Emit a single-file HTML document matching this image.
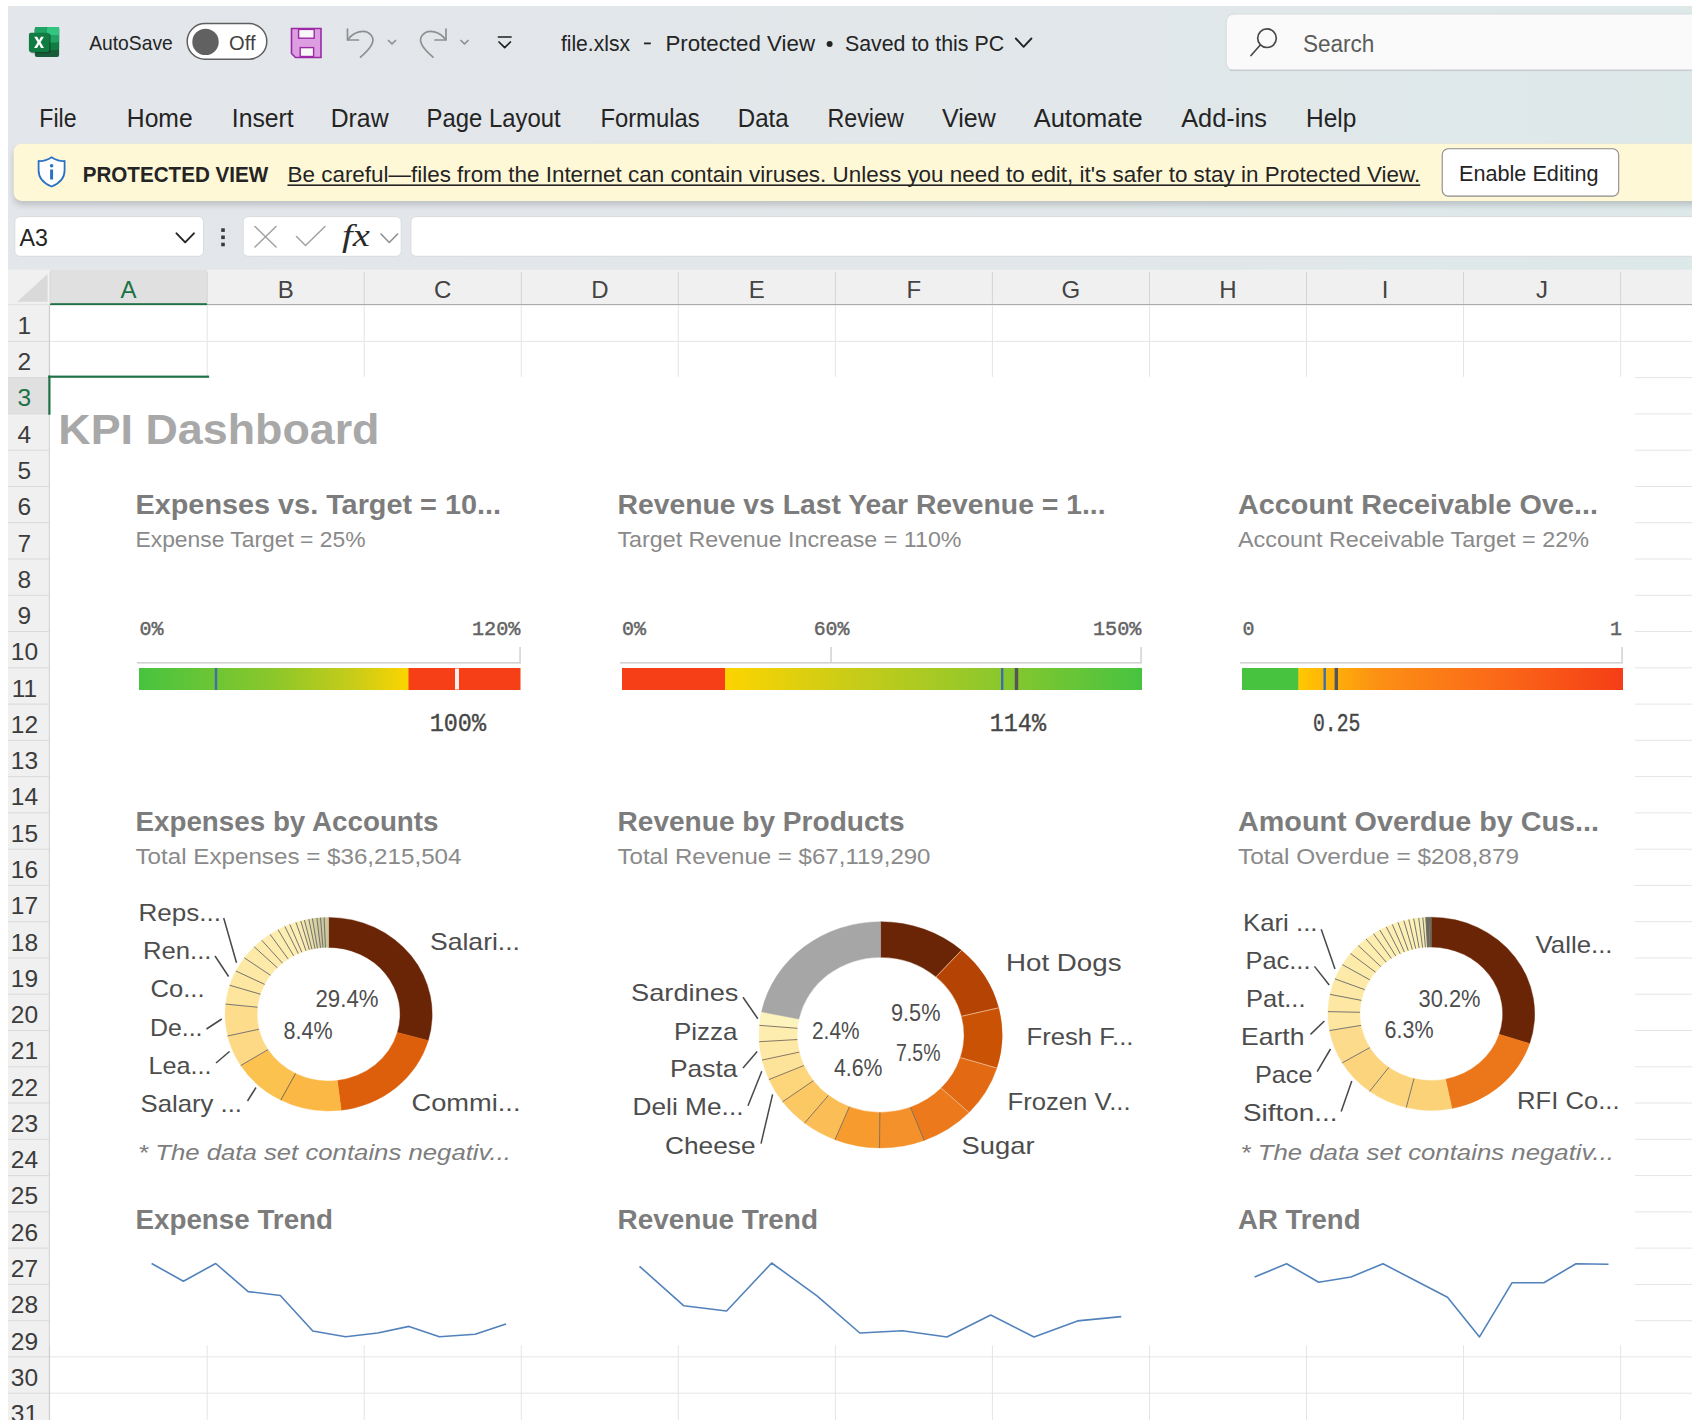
<!DOCTYPE html>
<html><head><meta charset="utf-8"><title>file.xlsx</title>
<style>
html,body{margin:0;padding:0;background:#fff;}
body{width:1703px;height:1427px;overflow:hidden;font-family:"Liberation Sans", sans-serif;}
svg{display:block;}

</style></head><body>
<svg width="1703" height="1427" viewBox="0 0 1703 1427" style="font-family:'Liberation Sans', sans-serif">
<defs>
<linearGradient id="appbg" x1="0" y1="0" x2="1" y2="0"><stop offset="0" stop-color="#e3e6ea"/><stop offset="0.55" stop-color="#e2e7ea"/><stop offset="1" stop-color="#dde8e9"/></linearGradient>
<linearGradient id="shadow" x1="0" y1="0" x2="0" y2="1"><stop offset="0" stop-color="#c9cfd2"/><stop offset="1" stop-color="#c9cfd2" stop-opacity="0"/></linearGradient>
<linearGradient id="g1" x1="0" x2="1"><stop offset="0" stop-color="#47c340"/><stop offset="0.5" stop-color="#8cc72a"/><stop offset="0.8" stop-color="#c9cc18"/><stop offset="1" stop-color="#fdd400"/></linearGradient>
<linearGradient id="g2" x1="0" x2="1"><stop offset="0" stop-color="#fdd400"/><stop offset="0.3" stop-color="#c9cc18"/><stop offset="0.6" stop-color="#95c82a"/><stop offset="1" stop-color="#47c340"/></linearGradient>
<linearGradient id="g3" x1="0" x2="1"><stop offset="0" stop-color="#ffc800"/><stop offset="0.25" stop-color="#fc8f14"/><stop offset="0.6" stop-color="#fb6a18"/><stop offset="1" stop-color="#f53d16"/></linearGradient>
<filter id="blur3" x="-5%" y="-50%" width="110%" height="200%"><feGaussianBlur stdDeviation="3"/></filter>
</defs>
<rect x="0" y="0" width="1703" height="1427" fill="#ffffff"/>
<rect x="8" y="6" width="1684" height="1414" fill="url(#appbg)"/>
<g>
<rect x="34.8" y="27" width="24.3" height="30.1" rx="2" fill="#185c37"/>
<rect x="34.8" y="27" width="24.3" height="23" rx="2" fill="#107c41"/>
<rect x="34.8" y="27" width="24.3" height="15.5" rx="2" fill="#21a366"/>
<rect x="47" y="27" width="12.1" height="8" rx="1.5" fill="#33c481"/>
<rect x="47" y="33" width="12.1" height="2" fill="#33c481"/>
<rect x="30.2" y="33.5" width="20.5" height="19.8" rx="2" fill="#0b3d20" opacity="0.55"/>
<rect x="28.9" y="32.7" width="20.1" height="19.2" rx="2" fill="#107c41"/>
<path d="M34.2 36.8 L37.2 36.8 L39.1 40.3 L41.0 36.8 L43.9 36.8 L40.6 42.3 L44.0 48.0 L41.0 48.0 L39.1 44.3 L37.1 48.0 L34.1 48.0 L37.6 42.3 Z" fill="#ffffff"/>
</g>
<text x="89.2" y="50.0" font-size="21" fill="#242424" textLength="83.6" lengthAdjust="spacingAndGlyphs">AutoSave</text>
<rect x="187.2" y="23.6" width="79.6" height="35.6" rx="17.8" fill="#ffffff" stroke="#5f5f5f" stroke-width="1.5"/>
<circle cx="205.5" cy="41.9" r="13.2" fill="#616161"/>
<text x="229.1" y="50.0" font-size="21" fill="#424242" textLength="26.5" lengthAdjust="spacingAndGlyphs">Off</text>
<path d="M291.5 28.5 H321 V57.5 H295.5 L291.5 53.5 Z" fill="#dc9ee0" stroke="#9c2aa6" stroke-width="1.6"/>
<rect x="298.6" y="29.4" width="15.6" height="8.8" fill="#f8f8f8" stroke="#9c2aa6" stroke-width="1.4"/>
<rect x="300.2" y="47.6" width="13.4" height="8.9" fill="#f8f8f8" stroke="#9c2aa6" stroke-width="1.4"/>
<g fill="none" stroke="#8f8f8f" stroke-width="1.7" stroke-linecap="round" stroke-linejoin="round">
<path d="M347.5 29 V40 H358.5"/>
<path d="M348 39.5 C353 32 365 28 371 35 C376 41 371 48 360.5 57.2"/>
<path d="M388.5 40.5 L392 44 L395.5 40.5"/>
<path d="M446 29 V40 H435"/>
<path d="M445.5 39.5 C440.5 32 428.5 28 422.5 35 C417.5 41 422.5 48 433 57.2"/>
<path d="M461 40.5 L464.5 44 L468 40.5"/>
</g>
<g fill="none" stroke="#1f1f1f" stroke-width="1.7" stroke-linecap="round" stroke-linejoin="round">
<path d="M498.5 37 H511"/><path d="M499 42 L504.7 47.7 L510.4 42"/>
</g>
<text x="560.9" y="51.0" font-size="22.5" fill="#242424" textLength="69.1" lengthAdjust="spacingAndGlyphs">file.xlsx</text>
<rect x="644" y="42.5" width="6.8" height="1.8" fill="#242424"/>
<text x="665.4" y="51.0" font-size="22.5" fill="#242424" textLength="149.6" lengthAdjust="spacingAndGlyphs">Protected View</text>
<circle cx="829.6" cy="44" r="3" fill="#242424"/>
<text x="844.9" y="51.0" font-size="22.5" fill="#242424" textLength="159.2" lengthAdjust="spacingAndGlyphs">Saved to this PC</text>
<path d="M1015.8 38.5 L1023.6 46.8 L1031.4 38.5" fill="none" stroke="#242424" stroke-width="1.9" stroke-linecap="round" stroke-linejoin="round"/>
<rect x="1226.2" y="14" width="480" height="56.5" rx="8" fill="#fafafa" stroke="#d6dadd" stroke-width="1"/>
<rect x="1230" y="69.5" width="470" height="1.5" fill="#c8cccf"/>
<g fill="none" stroke="#4a4a4a" stroke-width="1.7" stroke-linecap="round"><circle cx="1267" cy="38.2" r="9.3"/><path d="M1260.3 45 L1251 55.5"/></g>
<text x="1302.9" y="52.0" font-size="23" fill="#5c5c5c" textLength="71.5" lengthAdjust="spacingAndGlyphs">Search</text>
<text x="39.3" y="126.8" font-size="25.5" fill="#242424" textLength="37.2" lengthAdjust="spacingAndGlyphs">File</text>
<text x="126.8" y="126.8" font-size="25.5" fill="#242424" textLength="65.9" lengthAdjust="spacingAndGlyphs">Home</text>
<text x="231.8" y="126.8" font-size="25.5" fill="#242424" textLength="61.9" lengthAdjust="spacingAndGlyphs">Insert</text>
<text x="330.7" y="126.8" font-size="25.5" fill="#242424" textLength="57.9" lengthAdjust="spacingAndGlyphs">Draw</text>
<text x="426.6" y="126.8" font-size="25.5" fill="#242424" textLength="134.0" lengthAdjust="spacingAndGlyphs">Page Layout</text>
<text x="600.4" y="126.8" font-size="25.5" fill="#242424" textLength="99.2" lengthAdjust="spacingAndGlyphs">Formulas</text>
<text x="737.8" y="126.8" font-size="25.5" fill="#242424" textLength="50.8" lengthAdjust="spacingAndGlyphs">Data</text>
<text x="827.5" y="126.8" font-size="25.5" fill="#242424" textLength="76.2" lengthAdjust="spacingAndGlyphs">Review</text>
<text x="942.1" y="126.8" font-size="25.5" fill="#242424" textLength="53.7" lengthAdjust="spacingAndGlyphs">View</text>
<text x="1033.7" y="126.8" font-size="25.5" fill="#242424" textLength="109.0" lengthAdjust="spacingAndGlyphs">Automate</text>
<text x="1181.2" y="126.8" font-size="25.5" fill="#242424" textLength="85.8" lengthAdjust="spacingAndGlyphs">Add-ins</text>
<text x="1306.1" y="126.8" font-size="25.5" fill="#242424" textLength="50.3" lengthAdjust="spacingAndGlyphs">Help</text>
<rect x="13.7" y="148" width="1700" height="57" rx="8" fill="#000000" opacity="0.16" filter="url(#blur3)"/>
<rect x="13.7" y="143.7" width="1700" height="57.2" rx="8" fill="#fff8d7"/>
<rect x="1692" y="140" width="20" height="80" fill="#ffffff"/>
<path d="M51.6 157.2 C46.5 160.5 42 161.3 38.6 161 V170.5 C38.6 178.5 44 183.5 51.6 186.5 C59.2 183.5 64.6 178.5 64.6 170.5 V161 C61.2 161.3 56.7 160.5 51.6 157.2 Z" fill="#ffffff" stroke="#2b72c4" stroke-width="1.8" stroke-linejoin="round"/>
<circle cx="51.6" cy="165.8" r="1.8" fill="#2b72c4"/>
<rect x="50.1" y="169.5" width="3" height="10" fill="#2b72c4"/>
<text x="82.7" y="182.0" font-size="22.5" fill="#242424" font-weight="bold" textLength="185.5" lengthAdjust="spacingAndGlyphs">PROTECTED VIEW</text>
<text x="287.5" y="182.0" font-size="22.5" fill="#242424" textLength="1132.7" lengthAdjust="spacingAndGlyphs">Be careful—files from the Internet can contain viruses. Unless you need to edit, it's safer to stay in Protected View.</text>
<rect x="287.5" y="184.4" width="1132.7" height="1.6" fill="#242424"/>
<rect x="1442.2" y="148.8" width="176.5" height="47.3" rx="6" fill="#ffffff" stroke="#8a8a8a" stroke-width="1.1"/>
<text x="1459.0" y="181.3" font-size="22.5" fill="#242424" textLength="139.6" lengthAdjust="spacingAndGlyphs">Enable Editing</text>
<rect x="14.8" y="216.6" width="188.7" height="39.7" rx="5" fill="#ffffff" stroke="#d9dbdd" stroke-width="1"/>
<text x="19.6" y="245.6" font-size="24" fill="#242424" textLength="28.4" lengthAdjust="spacingAndGlyphs">A3</text>
<path d="M176.5 233.3 L185.2 242.3 L193.9 233.3" fill="none" stroke="#242424" stroke-width="1.9" stroke-linecap="round" stroke-linejoin="round"/>
<rect x="221.2" y="228.3" width="3.6" height="3.6" fill="#3a3a3a"/>
<rect x="221.2" y="235.5" width="3.6" height="3.6" fill="#3a3a3a"/>
<rect x="221.2" y="242.7" width="3.6" height="3.6" fill="#3a3a3a"/>
<rect x="243.2" y="216.6" width="158" height="39.7" rx="5" fill="#ffffff" stroke="#d9dbdd" stroke-width="1"/>
<g fill="none" stroke="#a3a3a3" stroke-width="1.6" stroke-linecap="round"><path d="M255 226.5 L276 247"/><path d="M276 226.5 L255 247"/><path d="M296.5 236.5 L305.5 245.5 L325 226.5"/></g>
<text x="342.0" y="246.0" font-size="32" fill="#2a2a2a" font-style="italic" font-family="'Liberation Serif', serif" textLength="27.7" lengthAdjust="spacingAndGlyphs">fx</text>
<path d="M381 234 L389.3 242.5 L397.6 234" fill="none" stroke="#8f8f8f" stroke-width="1.6" stroke-linecap="round" stroke-linejoin="round"/>
<rect x="410.9" y="216.6" width="1300" height="39.7" rx="5" fill="#ffffff" stroke="#d9dbdd" stroke-width="1"/>
<rect x="1692" y="210" width="20" height="60" fill="#ffffff"/>
<rect x="8" y="269.6" width="1684" height="35.4" fill="#f0f0f0"/>
<path d="M17.2 301.8 L47.6 274 L47.6 301.8 Z" fill="#d9d9d9"/>
<rect x="50.1" y="269.6" width="157.05" height="35.4" fill="#e0e0e0"/>
<rect x="49.6" y="304" width="1642.4" height="1.6" fill="#ababab"/><rect x="8" y="304.4" width="41.6" height="1" fill="#dadada"/>
<rect x="50.1" y="303.2" width="157.05" height="2.5" fill="#1e7145"/>
<rect x="49.6" y="272" width="1" height="31.6" fill="#d4d4d4"/>
<rect x="206.7" y="272" width="1" height="31.6" fill="#d4d4d4"/>
<rect x="363.7" y="272" width="1" height="31.6" fill="#d4d4d4"/>
<rect x="520.8" y="272" width="1" height="31.6" fill="#d4d4d4"/>
<rect x="677.8" y="272" width="1" height="31.6" fill="#d4d4d4"/>
<rect x="834.9" y="272" width="1" height="31.6" fill="#d4d4d4"/>
<rect x="991.9" y="272" width="1" height="31.6" fill="#d4d4d4"/>
<rect x="1149.0" y="272" width="1" height="31.6" fill="#d4d4d4"/>
<rect x="1306.0" y="272" width="1" height="31.6" fill="#d4d4d4"/>
<rect x="1463.0" y="272" width="1" height="31.6" fill="#d4d4d4"/>
<rect x="1620.1" y="272" width="1" height="31.6" fill="#d4d4d4"/>
<text x="128.6" y="297.7" font-size="24" fill="#1e7145" text-anchor="middle">A</text>
<text x="285.7" y="297.7" font-size="24" fill="#444444" text-anchor="middle">B</text>
<text x="442.7" y="297.7" font-size="24" fill="#444444" text-anchor="middle">C</text>
<text x="599.8" y="297.7" font-size="24" fill="#444444" text-anchor="middle">D</text>
<text x="756.8" y="297.7" font-size="24" fill="#444444" text-anchor="middle">E</text>
<text x="913.9" y="297.7" font-size="24" fill="#444444" text-anchor="middle">F</text>
<text x="1070.9" y="297.7" font-size="24" fill="#444444" text-anchor="middle">G</text>
<text x="1228.0" y="297.7" font-size="24" fill="#444444" text-anchor="middle">H</text>
<text x="1385.0" y="297.7" font-size="24" fill="#444444" text-anchor="middle">I</text>
<text x="1542.1" y="297.7" font-size="24" fill="#444444" text-anchor="middle">J</text>
<rect x="49.6" y="305.2" width="1642.4" height="1114.8" fill="#ffffff"/>
<rect x="49.6" y="340.9" width="1642.4" height="1" fill="#e5e5e5"/><rect x="49.6" y="377.1" width="1642.4" height="1" fill="#e5e5e5"/><rect x="49.6" y="413.4" width="1642.4" height="1" fill="#e5e5e5"/><rect x="49.6" y="449.7" width="1642.4" height="1" fill="#e5e5e5"/><rect x="49.6" y="486.0" width="1642.4" height="1" fill="#e5e5e5"/><rect x="49.6" y="522.2" width="1642.4" height="1" fill="#e5e5e5"/><rect x="49.6" y="558.5" width="1642.4" height="1" fill="#e5e5e5"/><rect x="49.6" y="594.8" width="1642.4" height="1" fill="#e5e5e5"/><rect x="49.6" y="631.0" width="1642.4" height="1" fill="#e5e5e5"/><rect x="49.6" y="667.3" width="1642.4" height="1" fill="#e5e5e5"/><rect x="49.6" y="703.6" width="1642.4" height="1" fill="#e5e5e5"/><rect x="49.6" y="739.8" width="1642.4" height="1" fill="#e5e5e5"/><rect x="49.6" y="776.1" width="1642.4" height="1" fill="#e5e5e5"/><rect x="49.6" y="812.4" width="1642.4" height="1" fill="#e5e5e5"/><rect x="49.6" y="848.7" width="1642.4" height="1" fill="#e5e5e5"/><rect x="49.6" y="884.9" width="1642.4" height="1" fill="#e5e5e5"/><rect x="49.6" y="921.2" width="1642.4" height="1" fill="#e5e5e5"/><rect x="49.6" y="957.5" width="1642.4" height="1" fill="#e5e5e5"/><rect x="49.6" y="993.7" width="1642.4" height="1" fill="#e5e5e5"/><rect x="49.6" y="1030.0" width="1642.4" height="1" fill="#e5e5e5"/><rect x="49.6" y="1066.3" width="1642.4" height="1" fill="#e5e5e5"/><rect x="49.6" y="1102.5" width="1642.4" height="1" fill="#e5e5e5"/><rect x="49.6" y="1138.8" width="1642.4" height="1" fill="#e5e5e5"/><rect x="49.6" y="1175.1" width="1642.4" height="1" fill="#e5e5e5"/><rect x="49.6" y="1211.4" width="1642.4" height="1" fill="#e5e5e5"/><rect x="49.6" y="1247.6" width="1642.4" height="1" fill="#e5e5e5"/><rect x="49.6" y="1283.9" width="1642.4" height="1" fill="#e5e5e5"/><rect x="49.6" y="1320.2" width="1642.4" height="1" fill="#e5e5e5"/><rect x="49.6" y="1356.4" width="1642.4" height="1" fill="#e5e5e5"/><rect x="49.6" y="1392.7" width="1642.4" height="1" fill="#e5e5e5"/><rect x="206.7" y="305.2" width="1" height="1114.8" fill="#e5e5e5"/><rect x="363.7" y="305.2" width="1" height="1114.8" fill="#e5e5e5"/><rect x="520.8" y="305.2" width="1" height="1114.8" fill="#e5e5e5"/><rect x="677.8" y="305.2" width="1" height="1114.8" fill="#e5e5e5"/><rect x="834.9" y="305.2" width="1" height="1114.8" fill="#e5e5e5"/><rect x="991.9" y="305.2" width="1" height="1114.8" fill="#e5e5e5"/><rect x="1149.0" y="305.2" width="1" height="1114.8" fill="#e5e5e5"/><rect x="1306.0" y="305.2" width="1" height="1114.8" fill="#e5e5e5"/><rect x="1463.0" y="305.2" width="1" height="1114.8" fill="#e5e5e5"/><rect x="1620.1" y="305.2" width="1" height="1114.8" fill="#e5e5e5"/>
<rect x="8" y="305.2" width="41.6" height="1114.8" fill="#f0f0f0"/>
<rect x="8" y="377.6" width="41.6" height="36.3" fill="#e0e0e0"/>
<rect x="48.8" y="305.2" width="1.3" height="1114.8" fill="#cfcfcf"/>
<rect x="8" y="340.9" width="41" height="1" fill="#dadada"/>
<rect x="8" y="377.1" width="41" height="1" fill="#dadada"/>
<rect x="8" y="413.4" width="41" height="1" fill="#dadada"/>
<rect x="8" y="449.7" width="41" height="1" fill="#dadada"/>
<rect x="8" y="486.0" width="41" height="1" fill="#dadada"/>
<rect x="8" y="522.2" width="41" height="1" fill="#dadada"/>
<rect x="8" y="558.5" width="41" height="1" fill="#dadada"/>
<rect x="8" y="594.8" width="41" height="1" fill="#dadada"/>
<rect x="8" y="631.0" width="41" height="1" fill="#dadada"/>
<rect x="8" y="667.3" width="41" height="1" fill="#dadada"/>
<rect x="8" y="703.6" width="41" height="1" fill="#dadada"/>
<rect x="8" y="739.8" width="41" height="1" fill="#dadada"/>
<rect x="8" y="776.1" width="41" height="1" fill="#dadada"/>
<rect x="8" y="812.4" width="41" height="1" fill="#dadada"/>
<rect x="8" y="848.7" width="41" height="1" fill="#dadada"/>
<rect x="8" y="884.9" width="41" height="1" fill="#dadada"/>
<rect x="8" y="921.2" width="41" height="1" fill="#dadada"/>
<rect x="8" y="957.5" width="41" height="1" fill="#dadada"/>
<rect x="8" y="993.7" width="41" height="1" fill="#dadada"/>
<rect x="8" y="1030.0" width="41" height="1" fill="#dadada"/>
<rect x="8" y="1066.3" width="41" height="1" fill="#dadada"/>
<rect x="8" y="1102.5" width="41" height="1" fill="#dadada"/>
<rect x="8" y="1138.8" width="41" height="1" fill="#dadada"/>
<rect x="8" y="1175.1" width="41" height="1" fill="#dadada"/>
<rect x="8" y="1211.4" width="41" height="1" fill="#dadada"/>
<rect x="8" y="1247.6" width="41" height="1" fill="#dadada"/>
<rect x="8" y="1283.9" width="41" height="1" fill="#dadada"/>
<rect x="8" y="1320.2" width="41" height="1" fill="#dadada"/>
<rect x="8" y="1356.4" width="41" height="1" fill="#dadada"/>
<rect x="8" y="1392.7" width="41" height="1" fill="#dadada"/>
<text x="24.4" y="333.9" font-size="24.5" fill="#3c3c3c" text-anchor="middle">1</text>
<text x="24.4" y="370.2" font-size="24.5" fill="#3c3c3c" text-anchor="middle">2</text>
<text x="24.4" y="406.4" font-size="24.5" fill="#1e7145" text-anchor="middle">3</text>
<text x="24.4" y="442.7" font-size="24.5" fill="#3c3c3c" text-anchor="middle">4</text>
<text x="24.4" y="479.0" font-size="24.5" fill="#3c3c3c" text-anchor="middle">5</text>
<text x="24.4" y="515.2" font-size="24.5" fill="#3c3c3c" text-anchor="middle">6</text>
<text x="24.4" y="551.5" font-size="24.5" fill="#3c3c3c" text-anchor="middle">7</text>
<text x="24.4" y="587.8" font-size="24.5" fill="#3c3c3c" text-anchor="middle">8</text>
<text x="24.4" y="624.1" font-size="24.5" fill="#3c3c3c" text-anchor="middle">9</text>
<text x="24.4" y="660.3" font-size="24.5" fill="#3c3c3c" text-anchor="middle">10</text>
<text x="24.4" y="696.6" font-size="24.5" fill="#3c3c3c" text-anchor="middle">11</text>
<text x="24.4" y="732.9" font-size="24.5" fill="#3c3c3c" text-anchor="middle">12</text>
<text x="24.4" y="769.1" font-size="24.5" fill="#3c3c3c" text-anchor="middle">13</text>
<text x="24.4" y="805.4" font-size="24.5" fill="#3c3c3c" text-anchor="middle">14</text>
<text x="24.4" y="841.7" font-size="24.5" fill="#3c3c3c" text-anchor="middle">15</text>
<text x="24.4" y="878.0" font-size="24.5" fill="#3c3c3c" text-anchor="middle">16</text>
<text x="24.4" y="914.2" font-size="24.5" fill="#3c3c3c" text-anchor="middle">17</text>
<text x="24.4" y="950.5" font-size="24.5" fill="#3c3c3c" text-anchor="middle">18</text>
<text x="24.4" y="986.8" font-size="24.5" fill="#3c3c3c" text-anchor="middle">19</text>
<text x="24.4" y="1023.0" font-size="24.5" fill="#3c3c3c" text-anchor="middle">20</text>
<text x="24.4" y="1059.3" font-size="24.5" fill="#3c3c3c" text-anchor="middle">21</text>
<text x="24.4" y="1095.6" font-size="24.5" fill="#3c3c3c" text-anchor="middle">22</text>
<text x="24.4" y="1131.8" font-size="24.5" fill="#3c3c3c" text-anchor="middle">23</text>
<text x="24.4" y="1168.1" font-size="24.5" fill="#3c3c3c" text-anchor="middle">24</text>
<text x="24.4" y="1204.4" font-size="24.5" fill="#3c3c3c" text-anchor="middle">25</text>
<text x="24.4" y="1240.7" font-size="24.5" fill="#3c3c3c" text-anchor="middle">26</text>
<text x="24.4" y="1276.9" font-size="24.5" fill="#3c3c3c" text-anchor="middle">27</text>
<text x="24.4" y="1313.2" font-size="24.5" fill="#3c3c3c" text-anchor="middle">28</text>
<text x="24.4" y="1349.5" font-size="24.5" fill="#3c3c3c" text-anchor="middle">29</text>
<text x="24.4" y="1385.7" font-size="24.5" fill="#3c3c3c" text-anchor="middle">30</text>
<text x="24.4" y="1422.0" font-size="24.5" fill="#3c3c3c" text-anchor="middle">31</text>
<rect x="49.8" y="376.8" width="1585.2" height="968.6" fill="#ffffff"/>
<rect x="48.3" y="375.6" width="160.8" height="2.2" fill="#1e7145"/>
<rect x="48.3" y="375.6" width="2.2" height="39.1" fill="#1e7145"/>
<text x="58.3" y="443.8" font-size="43" fill="#a8a8a8" font-weight="bold" textLength="321.2" lengthAdjust="spacingAndGlyphs">KPI Dashboard</text>
<text x="135.5" y="514.0" font-size="27.5" fill="#7c7c7c" font-weight="bold" textLength="365.5" lengthAdjust="spacingAndGlyphs">Expenses vs. Target = 10...</text>
<text x="135.5" y="547.0" font-size="22" fill="#8a8a8a" textLength="230.0" lengthAdjust="spacingAndGlyphs">Expense Target = 25%</text>
<text x="617.5" y="514.0" font-size="27.5" fill="#7c7c7c" font-weight="bold" textLength="488.0" lengthAdjust="spacingAndGlyphs">Revenue vs Last Year Revenue = 1...</text>
<text x="617.5" y="547.0" font-size="22" fill="#8a8a8a" textLength="344.0" lengthAdjust="spacingAndGlyphs">Target Revenue Increase = 110%</text>
<text x="1238.0" y="514.0" font-size="27.5" fill="#7c7c7c" font-weight="bold" textLength="360.0" lengthAdjust="spacingAndGlyphs">Account Receivable Ove...</text>
<text x="1238.0" y="547.0" font-size="22" fill="#8a8a8a" textLength="351.0" lengthAdjust="spacingAndGlyphs">Account Receivable Target = 22%</text>
<rect x="137" y="662" width="384" height="1.6" fill="#d2d2d2"/>
<rect x="519.3" y="647" width="1.5" height="16" fill="#d2d2d2"/>
<text x="139.5" y="634.6" font-size="21" fill="#636363" stroke="#636363" stroke-width="0.45" font-family="'Liberation Mono', monospace" textLength="24.0" lengthAdjust="spacingAndGlyphs">0%</text>
<text x="472.0" y="634.6" font-size="21" fill="#636363" stroke="#636363" stroke-width="0.45" font-family="'Liberation Mono', monospace" textLength="48.5" lengthAdjust="spacingAndGlyphs">120%</text>
<rect x="139" y="668" width="270" height="22" fill="url(#g1)"/>
<rect x="408.5" y="668" width="112" height="22" fill="#f63f17"/>
<rect x="214.8" y="668" width="2.4" height="22" fill="#3f6ea8"/>
<rect x="455" y="668.5" width="4" height="21" fill="#f0f0f0"/>
<text x="429.7" y="730.6" font-size="25" fill="#464646" stroke="#464646" stroke-width="0.35" font-family="'Liberation Mono', monospace" textLength="56.3" lengthAdjust="spacingAndGlyphs">100%</text>
<rect x="620" y="662" width="522" height="1.6" fill="#d2d2d2"/>
<rect x="830.3" y="647" width="1.5" height="16" fill="#d2d2d2"/>
<rect x="1140.3" y="647" width="1.5" height="16" fill="#d2d2d2"/>
<text x="622.0" y="634.6" font-size="21" fill="#636363" stroke="#636363" stroke-width="0.45" font-family="'Liberation Mono', monospace" textLength="24.0" lengthAdjust="spacingAndGlyphs">0%</text>
<text x="813.7" y="634.6" font-size="21" fill="#636363" stroke="#636363" stroke-width="0.45" font-family="'Liberation Mono', monospace" textLength="35.8" lengthAdjust="spacingAndGlyphs">60%</text>
<text x="1093.0" y="634.6" font-size="21" fill="#636363" stroke="#636363" stroke-width="0.45" font-family="'Liberation Mono', monospace" textLength="48.5" lengthAdjust="spacingAndGlyphs">150%</text>
<rect x="622" y="668" width="103.5" height="22" fill="#f63f17"/>
<rect x="725" y="668" width="417" height="22" fill="url(#g2)"/>
<rect x="1001" y="668" width="2.4" height="22" fill="#3f6ea8"/>
<rect x="1014.8" y="668" width="3.4" height="22" fill="#555555"/>
<text x="989.7" y="730.6" font-size="25" fill="#464646" stroke="#464646" stroke-width="0.35" font-family="'Liberation Mono', monospace" textLength="56.3" lengthAdjust="spacingAndGlyphs">114%</text>
<rect x="1240" y="662" width="383" height="1.6" fill="#d2d2d2"/>
<rect x="1621.3" y="647" width="1.5" height="16" fill="#d2d2d2"/>
<text x="1242.5" y="634.6" font-size="21" fill="#636363" stroke="#636363" stroke-width="0.45" font-family="'Liberation Mono', monospace" textLength="12.0" lengthAdjust="spacingAndGlyphs">0</text>
<text x="1610.0" y="634.6" font-size="21" fill="#636363" stroke="#636363" stroke-width="0.45" font-family="'Liberation Mono', monospace" textLength="12.0" lengthAdjust="spacingAndGlyphs">1</text>
<rect x="1242" y="668" width="56.8" height="22" fill="#47c340"/>
<rect x="1298.4" y="668" width="324.6" height="22" fill="url(#g3)"/>
<rect x="1323.5" y="668" width="2.4" height="22" fill="#3f6ea8"/>
<rect x="1334.6" y="668" width="3.4" height="22" fill="#555555"/>
<text x="1313.0" y="730.6" font-size="25" fill="#464646" stroke="#464646" stroke-width="0.35" font-family="'Liberation Mono', monospace" textLength="47.5" lengthAdjust="spacingAndGlyphs">0.25</text>
<text x="135.5" y="831.4" font-size="27.5" fill="#7c7c7c" font-weight="bold" textLength="303.0" lengthAdjust="spacingAndGlyphs">Expenses by Accounts</text>
<text x="135.5" y="864.0" font-size="22" fill="#8a8a8a" textLength="326.0" lengthAdjust="spacingAndGlyphs">Total Expenses = $36,215,504</text>
<text x="617.5" y="831.4" font-size="27.5" fill="#7c7c7c" font-weight="bold" textLength="287.0" lengthAdjust="spacingAndGlyphs">Revenue by Products</text>
<text x="617.5" y="864.0" font-size="22" fill="#8a8a8a" textLength="313.0" lengthAdjust="spacingAndGlyphs">Total Revenue = $67,119,290</text>
<text x="1238.0" y="831.4" font-size="27.5" fill="#7c7c7c" font-weight="bold" textLength="361.0" lengthAdjust="spacingAndGlyphs">Amount Overdue by Cus...</text>
<text x="1238.0" y="864.0" font-size="22" fill="#8a8a8a" textLength="281.0" lengthAdjust="spacingAndGlyphs">Total Overdue = $208,879</text>
<path d="M328.60 917.40 A103.58 96.80 0 0 1 428.26 1040.56 L397.38 1032.39 A71.48 66.80 0 0 0 328.60 947.40 Z" fill="#6a2506" stroke="#6a2506" stroke-width="0.4"/><path d="M428.26 1040.56 A103.58 96.80 0 0 1 341.22 1110.28 L337.31 1080.50 A71.48 66.80 0 0 0 397.38 1032.39 Z" fill="#dd5f0c" stroke="#dd5f0c" stroke-width="0.4"/><path d="M341.22 1110.28 A103.58 96.80 0 0 1 280.77 1100.06 L295.60 1073.45 A71.48 66.80 0 0 0 337.31 1080.50 Z" fill="#fbb845" stroke="#fbb845" stroke-width="0.4"/><path d="M280.77 1100.06 A103.58 96.80 0 0 1 240.76 1065.50 L267.98 1049.60 A71.48 66.80 0 0 0 295.60 1073.45 Z" fill="#fbc24f" stroke="#fbc24f" stroke-width="0.4"/><path d="M240.76 1065.50 A103.58 96.80 0 0 1 227.68 1035.98 L258.96 1029.23 A71.48 66.80 0 0 0 267.98 1049.60 Z" fill="#fdd985" stroke="#fdd985" stroke-width="0.4"/><path d="M227.68 1035.98 A103.58 96.80 0 0 1 225.59 1004.08 L257.52 1007.22 A71.48 66.80 0 0 0 258.96 1029.23 Z" fill="#fddc8b" stroke="#fddc8b" stroke-width="0.4"/><path d="M225.59 1004.08 A103.58 96.80 0 0 1 229.76 985.25 L260.39 994.22 A71.48 66.80 0 0 0 257.52 1007.22 Z" fill="#fde59d" stroke="#fde59d" stroke-width="0.4"/><path d="M229.76 985.25 A103.58 96.80 0 0 1 235.91 971.01 L264.63 984.39 A71.48 66.80 0 0 0 260.39 994.22 Z" fill="#fde7a1" stroke="#fde7a1" stroke-width="0.4"/><path d="M235.91 971.01 A103.58 96.80 0 0 1 244.38 957.85 L270.48 975.31 A71.48 66.80 0 0 0 264.63 984.39 Z" fill="#fde9a5" stroke="#fde9a5" stroke-width="0.4"/><path d="M244.38 957.85 A103.58 96.80 0 0 1 254.22 946.84 L277.27 967.71 A71.48 66.80 0 0 0 270.48 975.31 Z" fill="#fdeaa8" stroke="#fdeaa8" stroke-width="0.4"/><path d="M254.22 946.84 A103.58 96.80 0 0 1 261.75 940.26 L282.47 963.18 A71.48 66.80 0 0 0 277.27 967.71 Z" fill="#fdebab" stroke="#fdebab" stroke-width="0.4"/><path d="M261.75 940.26 A103.58 96.80 0 0 1 270.08 934.33 L288.22 959.08 A71.48 66.80 0 0 0 282.47 963.18 Z" fill="#fdecad" stroke="#fdecad" stroke-width="0.4"/><path d="M270.08 934.33 A103.58 96.80 0 0 1 278.07 929.70 L293.73 955.89 A71.48 66.80 0 0 0 288.22 959.08 Z" fill="#fdedaf" stroke="#fdedaf" stroke-width="0.4"/><path d="M278.07 929.70 A103.58 96.80 0 0 1 284.83 926.47 L298.39 953.66 A71.48 66.80 0 0 0 293.73 955.89 Z" fill="#fdeeb1" stroke="#fdeeb1" stroke-width="0.4"/><path d="M284.83 926.47 A103.58 96.80 0 0 1 289.80 924.45 L301.82 952.26 A71.48 66.80 0 0 0 298.39 953.66 Z" fill="#fdeeb3" stroke="#fdeeb3" stroke-width="0.4"/><path d="M289.80 924.45 A103.58 96.80 0 0 1 295.91 922.35 L306.04 950.82 A71.48 66.80 0 0 0 301.82 952.26 Z" fill="#fdefb4" stroke="#fdefb4" stroke-width="0.4"/><path d="M295.91 922.35 A103.58 96.80 0 0 1 300.75 920.97 L309.38 949.86 A71.48 66.80 0 0 0 306.04 950.82 Z" fill="#f8ebb2" stroke="#f8ebb2" stroke-width="0.4"/><path d="M300.75 920.97 A103.58 96.80 0 0 1 304.42 920.07 L311.91 949.25 A71.48 66.80 0 0 0 309.38 949.86 Z" fill="#f2e6ae" stroke="#f2e6ae" stroke-width="0.4"/><path d="M304.42 920.07 A103.58 96.80 0 0 1 308.84 919.18 L314.96 948.63 A71.48 66.80 0 0 0 311.91 949.25 Z" fill="#e9dfa9" stroke="#e9dfa9" stroke-width="0.4"/><path d="M308.84 919.18 A103.58 96.80 0 0 1 312.40 918.59 L317.42 948.22 A71.48 66.80 0 0 0 314.96 948.63 Z" fill="#e0d8a5" stroke="#e0d8a5" stroke-width="0.4"/><path d="M312.40 918.59 A103.58 96.80 0 0 1 316.87 918.02 L320.51 947.83 A71.48 66.80 0 0 0 317.42 948.22 Z" fill="#d6cfa0" stroke="#d6cfa0" stroke-width="0.4"/><path d="M316.87 918.02 A103.58 96.80 0 0 1 320.47 917.70 L322.99 947.61 A71.48 66.80 0 0 0 320.51 947.83 Z" fill="#cdc79c" stroke="#cdc79c" stroke-width="0.4"/><path d="M320.47 917.70 A103.58 96.80 0 0 1 324.08 917.49 L325.48 947.46 A71.48 66.80 0 0 0 322.99 947.61 Z" fill="#cdc79c" stroke="#cdc79c" stroke-width="0.4"/><path d="M324.08 917.49 A103.58 96.80 0 0 1 328.60 917.40 L328.60 947.40 A71.48 66.80 0 0 0 325.48 947.46 Z" fill="#cdc79c" stroke="#cdc79c" stroke-width="0.4"/><line x1="280.77" y1="1100.06" x2="295.60" y2="1073.45" stroke="#7a6a50" stroke-width="1.0"/><line x1="240.76" y1="1065.50" x2="267.98" y2="1049.60" stroke="#6a6a6a" stroke-width="0.9"/><line x1="227.68" y1="1035.98" x2="258.96" y2="1029.23" stroke="#6a6a6a" stroke-width="0.9"/><line x1="225.59" y1="1004.08" x2="257.52" y2="1007.22" stroke="#6a6a6a" stroke-width="0.9"/><line x1="229.76" y1="985.25" x2="260.39" y2="994.22" stroke="#666666" stroke-width="0.9"/><line x1="235.91" y1="971.01" x2="264.63" y2="984.39" stroke="#666666" stroke-width="0.9"/><line x1="244.38" y1="957.85" x2="270.48" y2="975.31" stroke="#666666" stroke-width="0.9"/><line x1="254.22" y1="946.84" x2="277.27" y2="967.71" stroke="#666666" stroke-width="0.9"/><line x1="261.75" y1="940.26" x2="282.47" y2="963.18" stroke="#666666" stroke-width="0.9"/><line x1="270.08" y1="934.33" x2="288.22" y2="959.08" stroke="#666666" stroke-width="0.9"/><line x1="278.07" y1="929.70" x2="293.73" y2="955.89" stroke="#666666" stroke-width="0.9"/><line x1="284.83" y1="926.47" x2="298.39" y2="953.66" stroke="#666666" stroke-width="0.9"/><line x1="289.80" y1="924.45" x2="301.82" y2="952.26" stroke="#666666" stroke-width="0.9"/><line x1="295.91" y1="922.35" x2="306.04" y2="950.82" stroke="#666666" stroke-width="0.9"/><line x1="300.75" y1="920.97" x2="309.38" y2="949.86" stroke="#666666" stroke-width="0.9"/><line x1="304.42" y1="920.07" x2="311.91" y2="949.25" stroke="#666666" stroke-width="0.9"/><line x1="308.84" y1="919.18" x2="314.96" y2="948.63" stroke="#666666" stroke-width="0.9"/><line x1="312.40" y1="918.59" x2="317.42" y2="948.22" stroke="#666666" stroke-width="0.9"/><line x1="316.87" y1="918.02" x2="320.51" y2="947.83" stroke="#666666" stroke-width="0.9"/><line x1="320.47" y1="917.70" x2="322.99" y2="947.61" stroke="#666666" stroke-width="0.9"/><line x1="324.08" y1="917.49" x2="325.48" y2="947.46" stroke="#666666" stroke-width="0.9"/>
<text x="315.5" y="1007.0" font-size="23.5" fill="#4d4d4d" textLength="63.0" lengthAdjust="spacingAndGlyphs">29.4%</text>
<text x="283.5" y="1039.0" font-size="23.5" fill="#4d4d4d" textLength="49.0" lengthAdjust="spacingAndGlyphs">8.4%</text>
<text x="138.5" y="921.0" font-size="24" fill="#4d4d4d" textLength="82.5" lengthAdjust="spacingAndGlyphs">Reps...</text>
<text x="143.0" y="959.0" font-size="24" fill="#4d4d4d" textLength="68.5" lengthAdjust="spacingAndGlyphs">Ren...</text>
<text x="150.5" y="997.0" font-size="24" fill="#4d4d4d" textLength="54.0" lengthAdjust="spacingAndGlyphs">Co...</text>
<text x="150.0" y="1035.5" font-size="24" fill="#4d4d4d" textLength="52.5" lengthAdjust="spacingAndGlyphs">De...</text>
<text x="148.5" y="1073.5" font-size="24" fill="#4d4d4d" textLength="63.0" lengthAdjust="spacingAndGlyphs">Lea...</text>
<text x="140.5" y="1111.5" font-size="24" fill="#4d4d4d" textLength="101.5" lengthAdjust="spacingAndGlyphs">Salary ...</text>
<text x="430.0" y="950.0" font-size="24" fill="#4d4d4d" textLength="90.0" lengthAdjust="spacingAndGlyphs">Salari...</text>
<text x="411.5" y="1110.5" font-size="24" fill="#4d4d4d" textLength="109.0" lengthAdjust="spacingAndGlyphs">Commi...</text>
<line x1="223.7" y1="918" x2="236.5" y2="962.8" stroke="#484848" stroke-width="1.5"/>
<line x1="215" y1="956" x2="228.6" y2="976.5" stroke="#484848" stroke-width="1.5"/>
<line x1="206.5" y1="1029" x2="221.8" y2="1019" stroke="#484848" stroke-width="1.5"/>
<line x1="216" y1="1063" x2="229.5" y2="1051.5" stroke="#484848" stroke-width="1.5"/>
<line x1="247.5" y1="1101" x2="256" y2="1087.5" stroke="#484848" stroke-width="1.5"/>
<text x="138.0" y="1159.5" font-size="22.5" fill="#7d7d7d" font-style="italic" textLength="373.0" lengthAdjust="spacingAndGlyphs">* The data set contains negativ...</text>
<path d="M880.60 921.70 A121.58 113.10 0 0 1 961.48 950.36 L936.09 976.86 A83.42 77.60 0 0 0 880.60 957.20 Z" fill="#6a2506" stroke="#6a2506" stroke-width="0.4"/><path d="M961.48 950.36 A121.58 113.10 0 0 1 998.67 1007.82 L961.61 1016.29 A83.42 77.60 0 0 0 936.09 976.86 Z" fill="#b54304" stroke="#b54304" stroke-width="0.4"/><path d="M998.67 1007.82 A121.58 113.10 0 0 1 996.81 1068.06 L960.33 1057.62 A83.42 77.60 0 0 0 961.61 1016.29 Z" fill="#ca5205" stroke="#ca5205" stroke-width="0.4"/><path d="M996.81 1068.06 A121.58 113.10 0 0 1 968.94 1112.51 L941.21 1088.12 A83.42 77.60 0 0 0 960.33 1057.62 Z" fill="#e36912" stroke="#e36912" stroke-width="0.4"/><path d="M968.94 1112.51 A121.58 113.10 0 0 1 924.17 1140.39 L910.50 1107.25 A83.42 77.60 0 0 0 941.21 1088.12 Z" fill="#ec7a1c" stroke="#ec7a1c" stroke-width="0.4"/><path d="M924.17 1140.39 A121.58 113.10 0 0 1 879.54 1147.90 L879.87 1112.40 A83.42 77.60 0 0 0 910.50 1107.25 Z" fill="#f5912a" stroke="#f5912a" stroke-width="0.4"/><path d="M879.54 1147.90 A121.58 113.10 0 0 1 835.05 1139.66 L849.35 1106.75 A83.42 77.60 0 0 0 879.87 1112.40 Z" fill="#f89b2e" stroke="#f89b2e" stroke-width="0.4"/><path d="M835.05 1139.66 A121.58 113.10 0 0 1 804.58 1123.07 L828.44 1095.36 A83.42 77.60 0 0 0 849.35 1106.75 Z" fill="#fbbd55" stroke="#fbbd55" stroke-width="0.4"/><path d="M804.58 1123.07 A121.58 113.10 0 0 1 782.61 1101.76 L813.37 1080.74 A83.42 77.60 0 0 0 828.44 1095.36 Z" fill="#fcc864" stroke="#fcc864" stroke-width="0.4"/><path d="M782.61 1101.76 A121.58 113.10 0 0 1 768.93 1079.54 L803.98 1065.49 A83.42 77.60 0 0 0 813.37 1080.74 Z" fill="#fdd57b" stroke="#fdd57b" stroke-width="0.4"/><path d="M768.93 1079.54 A121.58 113.10 0 0 1 762.09 1060.05 L799.29 1052.12 A83.42 77.60 0 0 0 803.98 1065.49 Z" fill="#fde39a" stroke="#fde39a" stroke-width="0.4"/><path d="M762.09 1060.05 A121.58 113.10 0 0 1 759.24 1041.70 L797.34 1039.54 A83.42 77.60 0 0 0 799.29 1052.12 Z" fill="#fde8a5" stroke="#fde8a5" stroke-width="0.4"/><path d="M759.24 1041.70 A121.58 113.10 0 0 1 759.44 1025.34 L797.47 1028.31 A83.42 77.60 0 0 0 797.34 1039.54 Z" fill="#fdeeb0" stroke="#fdeeb0" stroke-width="0.4"/><path d="M759.44 1025.34 A121.58 113.10 0 0 1 761.54 1011.86 L798.91 1019.06 A83.42 77.60 0 0 0 797.47 1028.31 Z" fill="#fdf3bd" stroke="#fdf3bd" stroke-width="0.4"/><path d="M761.54 1011.86 A121.58 113.10 0 0 1 880.60 921.70 L880.60 957.20 A83.42 77.60 0 0 0 798.91 1019.06 Z" fill="#a6a6a6" stroke="#a6a6a6" stroke-width="0.4"/><line x1="961.48" y1="950.36" x2="936.09" y2="976.86" stroke="#e8b890" stroke-width="0.9"/><line x1="998.67" y1="1007.82" x2="961.61" y2="1016.29" stroke="#e8b890" stroke-width="0.9"/><line x1="996.81" y1="1068.06" x2="960.33" y2="1057.62" stroke="#e8b890" stroke-width="0.9"/><line x1="968.94" y1="1112.51" x2="941.21" y2="1088.12" stroke="#e8b890" stroke-width="0.9"/><line x1="924.17" y1="1140.39" x2="910.50" y2="1107.25" stroke="#7a6a5a" stroke-width="0.9"/><line x1="879.54" y1="1147.90" x2="879.87" y2="1112.40" stroke="#7a6a5a" stroke-width="0.9"/><line x1="835.05" y1="1139.66" x2="849.35" y2="1106.75" stroke="#7a6a5a" stroke-width="0.9"/><line x1="804.58" y1="1123.07" x2="828.44" y2="1095.36" stroke="#7a6a5a" stroke-width="0.9"/><line x1="782.61" y1="1101.76" x2="813.37" y2="1080.74" stroke="#7a6a5a" stroke-width="0.9"/><line x1="768.93" y1="1079.54" x2="803.98" y2="1065.49" stroke="#7a6a5a" stroke-width="0.9"/><line x1="762.09" y1="1060.05" x2="799.29" y2="1052.12" stroke="#7a6a5a" stroke-width="0.9"/><line x1="759.24" y1="1041.70" x2="797.34" y2="1039.54" stroke="#7a6a5a" stroke-width="0.9"/><line x1="759.44" y1="1025.34" x2="797.47" y2="1028.31" stroke="#7a6a5a" stroke-width="0.9"/>
<text x="891.0" y="1021.0" font-size="23.5" fill="#4d4d4d" textLength="49.5" lengthAdjust="spacingAndGlyphs">9.5%</text>
<text x="812.0" y="1039.0" font-size="23.5" fill="#4d4d4d" textLength="47.5" lengthAdjust="spacingAndGlyphs">2.4%</text>
<text x="896.0" y="1060.5" font-size="23.5" fill="#4d4d4d" textLength="44.5" lengthAdjust="spacingAndGlyphs">7.5%</text>
<text x="834.0" y="1076.0" font-size="23.5" fill="#4d4d4d" textLength="48.5" lengthAdjust="spacingAndGlyphs">4.6%</text>
<text x="1006.0" y="971.0" font-size="24" fill="#4d4d4d" textLength="115.5" lengthAdjust="spacingAndGlyphs">Hot Dogs</text>
<text x="1026.5" y="1045.0" font-size="24" fill="#4d4d4d" textLength="107.0" lengthAdjust="spacingAndGlyphs">Fresh F...</text>
<text x="1007.5" y="1110.0" font-size="24" fill="#4d4d4d" textLength="123.0" lengthAdjust="spacingAndGlyphs">Frozen V...</text>
<text x="961.5" y="1153.5" font-size="24" fill="#4d4d4d" textLength="73.0" lengthAdjust="spacingAndGlyphs">Sugar</text>
<text x="631.0" y="1001.0" font-size="24" fill="#4d4d4d" textLength="107.5" lengthAdjust="spacingAndGlyphs">Sardines</text>
<text x="674.0" y="1039.5" font-size="24" fill="#4d4d4d" textLength="63.5" lengthAdjust="spacingAndGlyphs">Pizza</text>
<text x="670.0" y="1077.0" font-size="24" fill="#4d4d4d" textLength="67.5" lengthAdjust="spacingAndGlyphs">Pasta</text>
<text x="632.5" y="1114.5" font-size="24" fill="#4d4d4d" textLength="111.0" lengthAdjust="spacingAndGlyphs">Deli Me...</text>
<text x="665.0" y="1153.5" font-size="24" fill="#4d4d4d" textLength="90.5" lengthAdjust="spacingAndGlyphs">Cheese</text>
<line x1="743" y1="997.3" x2="757.8" y2="1018.7" stroke="#484848" stroke-width="1.5"/>
<line x1="743" y1="1068" x2="757.2" y2="1051.6" stroke="#484848" stroke-width="1.5"/>
<line x1="748" y1="1105.8" x2="761.8" y2="1071.3" stroke="#484848" stroke-width="1.5"/>
<line x1="761" y1="1143.6" x2="772.6" y2="1094.3" stroke="#484848" stroke-width="1.5"/>
<path d="M1431.30 917.20 A103.36 96.60 0 0 1 1529.66 1043.49 L1499.21 1034.30 A71.37 66.70 0 0 0 1431.30 947.10 Z" fill="#6a2506" stroke="#6a2506" stroke-width="0.4"/><path d="M1529.66 1043.49 A103.36 96.60 0 0 1 1451.91 1108.46 L1445.53 1079.16 A71.37 66.70 0 0 0 1499.21 1034.30 Z" fill="#ec771b" stroke="#ec771b" stroke-width="0.4"/><path d="M1451.91 1108.46 A103.36 96.60 0 0 1 1406.29 1107.53 L1414.03 1078.52 A71.37 66.70 0 0 0 1445.53 1079.16 Z" fill="#fcd279" stroke="#fcd279" stroke-width="0.4"/><path d="M1406.29 1107.53 A103.36 96.60 0 0 1 1369.67 1091.35 L1388.75 1067.35 A71.37 66.70 0 0 0 1414.03 1078.52 Z" fill="#fcd47c" stroke="#fcd47c" stroke-width="0.4"/><path d="M1369.67 1091.35 A103.36 96.60 0 0 1 1342.24 1062.83 L1369.81 1047.65 A71.37 66.70 0 0 0 1388.75 1067.35 Z" fill="#fcd47e" stroke="#fcd47e" stroke-width="0.4"/><path d="M1342.24 1062.83 A103.36 96.60 0 0 1 1329.51 1030.57 L1361.02 1025.38 A71.37 66.70 0 0 0 1369.81 1047.65 Z" fill="#fddb8d" stroke="#fddb8d" stroke-width="0.4"/><path d="M1329.51 1030.57 A103.36 96.60 0 0 1 1327.96 1011.61 L1359.95 1012.29 A71.37 66.70 0 0 0 1361.02 1025.38 Z" fill="#fde69f" stroke="#fde69f" stroke-width="0.4"/><path d="M1327.96 1011.61 A103.36 96.60 0 0 1 1330.05 994.38 L1361.39 1000.39 A71.37 66.70 0 0 0 1359.95 1012.29 Z" fill="#fde7a2" stroke="#fde7a2" stroke-width="0.4"/><path d="M1330.05 994.38 A103.36 96.60 0 0 1 1334.93 978.87 L1364.76 989.68 A71.37 66.70 0 0 0 1361.39 1000.39 Z" fill="#fde9a5" stroke="#fde9a5" stroke-width="0.4"/><path d="M1334.93 978.87 A103.36 96.60 0 0 1 1342.33 964.63 L1369.87 979.85 A71.37 66.70 0 0 0 1364.76 989.68 Z" fill="#fdeaa8" stroke="#fdeaa8" stroke-width="0.4"/><path d="M1342.33 964.63 A103.36 96.60 0 0 1 1350.52 953.53 L1375.52 972.19 A71.37 66.70 0 0 0 1369.87 979.85 Z" fill="#fdebaa" stroke="#fdebaa" stroke-width="0.4"/><path d="M1350.52 953.53 A103.36 96.60 0 0 1 1358.21 945.49 L1380.83 966.64 A71.37 66.70 0 0 0 1375.52 972.19 Z" fill="#fdecac" stroke="#fdecac" stroke-width="0.4"/><path d="M1358.21 945.49 A103.36 96.60 0 0 1 1365.97 938.94 L1386.19 962.11 A71.37 66.70 0 0 0 1380.83 966.64 Z" fill="#fdedae" stroke="#fdedae" stroke-width="0.4"/><path d="M1365.97 938.94 A103.36 96.60 0 0 1 1373.50 933.71 L1391.39 958.50 A71.37 66.70 0 0 0 1386.19 962.11 Z" fill="#fdeeb0" stroke="#fdeeb0" stroke-width="0.4"/><path d="M1373.50 933.71 A103.36 96.60 0 0 1 1379.78 930.06 L1395.72 955.98 A71.37 66.70 0 0 0 1391.39 958.50 Z" fill="#fdeeb1" stroke="#fdeeb1" stroke-width="0.4"/><path d="M1379.78 930.06 A103.36 96.60 0 0 1 1386.31 926.83 L1400.24 953.75 A71.37 66.70 0 0 0 1395.72 955.98 Z" fill="#fdefb3" stroke="#fdefb3" stroke-width="0.4"/><path d="M1386.31 926.83 A103.36 96.60 0 0 1 1392.25 924.36 L1404.33 952.04 A71.37 66.70 0 0 0 1400.24 953.75 Z" fill="#fdefb4" stroke="#fdefb4" stroke-width="0.4"/><path d="M1392.25 924.36 A103.36 96.60 0 0 1 1397.99 922.35 L1408.30 950.66 A71.37 66.70 0 0 0 1404.33 952.04 Z" fill="#fdf0b5" stroke="#fdf0b5" stroke-width="0.4"/><path d="M1397.99 922.35 A103.36 96.60 0 0 1 1403.85 920.67 L1412.35 949.49 A71.37 66.70 0 0 0 1408.30 950.66 Z" fill="#fdf0b6" stroke="#fdf0b6" stroke-width="0.4"/><path d="M1403.85 920.67 A103.36 96.60 0 0 1 1408.75 919.53 L1415.73 948.71 A71.37 66.70 0 0 0 1412.35 949.49 Z" fill="#fdf1b7" stroke="#fdf1b7" stroke-width="0.4"/><path d="M1408.75 919.53 A103.36 96.60 0 0 1 1413.71 918.61 L1419.15 948.07 A71.37 66.70 0 0 0 1415.73 948.71 Z" fill="#fdf1b8" stroke="#fdf1b8" stroke-width="0.4"/><path d="M1413.71 918.61 A103.36 96.60 0 0 1 1418.70 917.92 L1422.60 947.60 A71.37 66.70 0 0 0 1419.15 948.07 Z" fill="#fbefb7" stroke="#fbefb7" stroke-width="0.4"/><path d="M1418.70 917.92 A103.36 96.60 0 0 1 1422.83 917.52 L1425.45 947.32 A71.37 66.70 0 0 0 1422.60 947.60 Z" fill="#f6ebb4" stroke="#f6ebb4" stroke-width="0.4"/><path d="M1422.83 917.52 A103.36 96.60 0 0 1 1425.89 917.33 L1427.56 947.19 A71.37 66.70 0 0 0 1425.45 947.32 Z" fill="#efe6b0" stroke="#efe6b0" stroke-width="0.4"/><path d="M1425.89 917.33 A103.36 96.60 0 0 1 1428.95 917.22 L1429.68 947.12 A71.37 66.70 0 0 0 1427.56 947.19 Z" fill="#6b6b5c" stroke="#6b6b5c" stroke-width="0.4"/><path d="M1428.95 917.22 A103.36 96.60 0 0 1 1431.30 917.20 L1431.30 947.10 A71.37 66.70 0 0 0 1429.68 947.12 Z" fill="#6b6b5c" stroke="#6b6b5c" stroke-width="0.4"/><line x1="1406.29" y1="1107.53" x2="1414.03" y2="1078.52" stroke="#6a6a6a" stroke-width="0.9"/><line x1="1369.67" y1="1091.35" x2="1388.75" y2="1067.35" stroke="#6a6a6a" stroke-width="0.9"/><line x1="1342.24" y1="1062.83" x2="1369.81" y2="1047.65" stroke="#6a6a6a" stroke-width="0.9"/><line x1="1329.51" y1="1030.57" x2="1361.02" y2="1025.38" stroke="#6a6a6a" stroke-width="0.9"/><line x1="1327.96" y1="1011.61" x2="1359.95" y2="1012.29" stroke="#666666" stroke-width="0.9"/><line x1="1330.05" y1="994.38" x2="1361.39" y2="1000.39" stroke="#666666" stroke-width="0.9"/><line x1="1334.93" y1="978.87" x2="1364.76" y2="989.68" stroke="#666666" stroke-width="0.9"/><line x1="1342.33" y1="964.63" x2="1369.87" y2="979.85" stroke="#666666" stroke-width="0.9"/><line x1="1350.52" y1="953.53" x2="1375.52" y2="972.19" stroke="#666666" stroke-width="0.9"/><line x1="1358.21" y1="945.49" x2="1380.83" y2="966.64" stroke="#666666" stroke-width="0.9"/><line x1="1365.97" y1="938.94" x2="1386.19" y2="962.11" stroke="#666666" stroke-width="0.9"/><line x1="1373.50" y1="933.71" x2="1391.39" y2="958.50" stroke="#666666" stroke-width="0.9"/><line x1="1379.78" y1="930.06" x2="1395.72" y2="955.98" stroke="#666666" stroke-width="0.9"/><line x1="1386.31" y1="926.83" x2="1400.24" y2="953.75" stroke="#666666" stroke-width="0.9"/><line x1="1392.25" y1="924.36" x2="1404.33" y2="952.04" stroke="#666666" stroke-width="0.9"/><line x1="1397.99" y1="922.35" x2="1408.30" y2="950.66" stroke="#666666" stroke-width="0.9"/><line x1="1403.85" y1="920.67" x2="1412.35" y2="949.49" stroke="#666666" stroke-width="0.9"/><line x1="1408.75" y1="919.53" x2="1415.73" y2="948.71" stroke="#666666" stroke-width="0.9"/><line x1="1413.71" y1="918.61" x2="1419.15" y2="948.07" stroke="#666666" stroke-width="0.9"/><line x1="1418.70" y1="917.92" x2="1422.60" y2="947.60" stroke="#666666" stroke-width="0.9"/><line x1="1422.83" y1="917.52" x2="1425.45" y2="947.32" stroke="#666666" stroke-width="0.9"/><line x1="1425.89" y1="917.33" x2="1427.56" y2="947.19" stroke="#666666" stroke-width="0.9"/>
<text x="1418.5" y="1007.0" font-size="23.5" fill="#4d4d4d" textLength="62.0" lengthAdjust="spacingAndGlyphs">30.2%</text>
<text x="1384.5" y="1038.0" font-size="23.5" fill="#4d4d4d" textLength="49.0" lengthAdjust="spacingAndGlyphs">6.3%</text>
<text x="1243.0" y="931.0" font-size="24" fill="#4d4d4d" textLength="74.5" lengthAdjust="spacingAndGlyphs">Kari ...</text>
<text x="1245.5" y="968.5" font-size="24" fill="#4d4d4d" textLength="65.0" lengthAdjust="spacingAndGlyphs">Pac...</text>
<text x="1246.0" y="1007.0" font-size="24" fill="#4d4d4d" textLength="59.5" lengthAdjust="spacingAndGlyphs">Pat...</text>
<text x="1241.0" y="1044.5" font-size="24" fill="#4d4d4d" textLength="63.5" lengthAdjust="spacingAndGlyphs">Earth</text>
<text x="1255.0" y="1083.0" font-size="24" fill="#4d4d4d" textLength="57.5" lengthAdjust="spacingAndGlyphs">Pace</text>
<text x="1243.0" y="1120.5" font-size="24" fill="#4d4d4d" textLength="94.5" lengthAdjust="spacingAndGlyphs">Sifton...</text>
<text x="1535.5" y="952.5" font-size="24" fill="#4d4d4d" textLength="77.0" lengthAdjust="spacingAndGlyphs">Valle...</text>
<text x="1517.0" y="1108.5" font-size="24" fill="#4d4d4d" textLength="102.5" lengthAdjust="spacingAndGlyphs">RFI Co...</text>
<line x1="1321.2" y1="929.2" x2="1335" y2="969.1" stroke="#484848" stroke-width="1.5"/>
<line x1="1314.5" y1="966.4" x2="1329.2" y2="985" stroke="#484848" stroke-width="1.5"/>
<line x1="1310.5" y1="1034.4" x2="1324.4" y2="1021" stroke="#484848" stroke-width="1.5"/>
<line x1="1317.2" y1="1071.6" x2="1330.5" y2="1049" stroke="#484848" stroke-width="1.5"/>
<line x1="1341.2" y1="1111.6" x2="1351.8" y2="1081" stroke="#484848" stroke-width="1.5"/>
<text x="1240.5" y="1159.5" font-size="22.5" fill="#7d7d7d" font-style="italic" textLength="373.5" lengthAdjust="spacingAndGlyphs">* The data set contains negativ...</text>
<text x="135.5" y="1228.7" font-size="27.5" fill="#7c7c7c" font-weight="bold" textLength="197.5" lengthAdjust="spacingAndGlyphs">Expense Trend</text>
<text x="617.5" y="1228.7" font-size="27.5" fill="#7c7c7c" font-weight="bold" textLength="200.5" lengthAdjust="spacingAndGlyphs">Revenue Trend</text>
<text x="1238.0" y="1228.7" font-size="27.5" fill="#7c7c7c" font-weight="bold" textLength="122.5" lengthAdjust="spacingAndGlyphs">AR Trend</text>
<polyline points="151.6,1263.5 183.4,1281.2 215.7,1263.5 248.2,1291.6 280.3,1295.5 312.8,1331.0 345.6,1336.7 377.7,1333.0 409.0,1326.4 439.4,1336.7 475.1,1334.3 506.0,1323.9" fill="none" stroke="#5282bc" stroke-width="1.6" stroke-linejoin="round"/>
<polyline points="639.5,1266.3 683.9,1305.8 726.6,1311.0 771.7,1263.0 817.0,1295.9 859.8,1333.0 902.5,1330.7 946.9,1337.0 990.7,1315.0 1034.0,1337.0 1077.5,1320.9 1121.2,1316.6" fill="none" stroke="#5282bc" stroke-width="1.6" stroke-linejoin="round"/>
<polyline points="1254.6,1277.0 1286.6,1263.7 1318.7,1282.2 1351.0,1277.0 1383.0,1263.7 1415.7,1280.8 1447.5,1297.2 1479.5,1336.9 1512.1,1282.7 1543.9,1282.7 1576.0,1263.7 1608.5,1264.3" fill="none" stroke="#5282bc" stroke-width="1.6" stroke-linejoin="round"/>
<rect x="1692" y="0" width="11" height="1427" fill="#ffffff"/>
<rect x="0" y="1420" width="1703" height="7" fill="#ffffff"/>
</svg>
</body></html>
